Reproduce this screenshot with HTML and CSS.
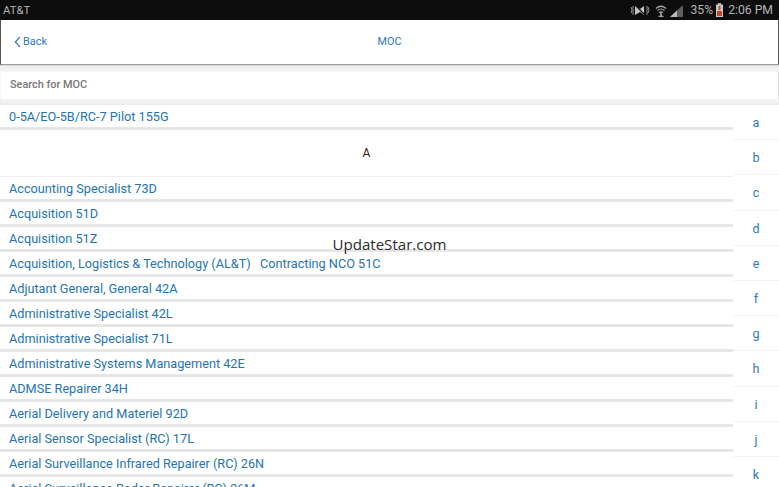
FILE: index.html
```html
<!DOCTYPE html>
<html lang="en">
<head>
<meta charset="utf-8">
<title>MOC</title>
<link rel="stylesheet" href="styles.css">
</head>
<body>
<div class="app">
  <div class="status">
    <span class="carrier">AT&amp;T</span>
    <div class="status-right">
      <svg class="ic" width="20" height="13" viewBox="0 0 20 13"><path d="M1 3l1 3-1 3M18 3l1 3-1 3M3 2v9M17 2v9" stroke="#8f8f8f" fill="none"/><path d="M5 2l5 3 4-3v9l-4-3-5 3z" fill="#c4c4c4"/><path d="M5 1l10 10" stroke="#1a1a1a" stroke-width="1.200"/></svg>
      <svg class="ic wifi" width="12" height="13" viewBox="0 0 12 13"><path d="M1 4.500Q6 0 11 4.500M2.500 6.500Q6 3.500 9.500 6.500M4 8.500Q6 7 8 8.500" stroke="#a8a8a8" stroke-width="1.200" fill="none"/><path d="M6 8v4M3.500 12.500h5" stroke="#a8a8a8" stroke-width="1.600"/></svg>
      <svg class="ic sig" width="14" height="13" viewBox="0 0 14 13"><path d="M0 13L13 1v12z" fill="#5f5f5f"/><path d="M0 13L7 6.500V13z" fill="#bcbcbc"/></svg>
      <span class="pct">35%</span>
      <svg class="ic batt" width="7" height="14" viewBox="0 0 7 14"><path d="M2 0h3v2H2z" fill="#b0b0b0"/><path d="M0 1.500h7V14H0z" fill="#c9c9c9"/><path d="M1 8h5v5H1z" fill="#c4452e"/><path d="M2.500 3h2v4h-2z" fill="#c4452e"/></svg>
      <span class="time">2:06 PM</span>
    </div>
  </div>
  <header class="nav">
    <a class="back"><svg width="7" height="12" viewBox="0 0 7 12"><path d="M6 1L1.300 6 6 11" stroke="#2b7bba" stroke-width="1.100" fill="none"/></svg>Back</a>
    <span class="title">MOC</span>
  </header>
  <div class="search-wrap"><div class="search">Search for MOC</div></div>
  <div class="content">
    <ul class="list">
      <li class="row">0-5A/EO-5B/RC-7 Pilot 155G</li>
      <li class="section">A</li>
      <li class="row">Accounting Specialist 73D</li>
      <li class="row">Acquisition 51D</li>
      <li class="row">Acquisition 51Z</li>
      <li class="row">Acquisition, Logistics &amp; Technology (AL&amp;T)&nbsp;&nbsp; Contracting NCO 51C</li>
      <li class="row">Adjutant General, General 42A</li>
      <li class="row">Administrative Specialist 42L</li>
      <li class="row">Administrative Specialist 71L</li>
      <li class="row">Administrative Systems Management 42E</li>
      <li class="row">ADMSE Repairer 34H</li>
      <li class="row">Aerial Delivery and Materiel 92D</li>
      <li class="row">Aerial Sensor Specialist (RC) 17L</li>
      <li class="row">Aerial Surveillance Infrared Repairer (RC) 26N</li>
      <li class="row">Aerial Surveillance Radar Repairer (RC) 26M</li>
    </ul>
    <ul class="index">
      <li>a</li><li>b</li><li>c</li><li>d</li><li>e</li><li>f</li><li>g</li><li>h</li><li>i</li><li>j</li><li>k</li>
    </ul>
  </div>
  <div class="watermark">UpdateStar.com</div>
</div>
</body>
</html>
```
FILE: styles.css
```css
* { box-sizing: border-box; }
html, body { margin: 0; padding: 0; background: #fff; }
body { font-family: Roboto, "Liberation Sans", sans-serif; }
ul { list-style: none; margin: 0; padding: 0; }
.app { position: relative; width: 779px; height: 487px; overflow: hidden; display: flex; flex-direction: column; }
.status { height: 20px; flex: none; background: #0d0d0d; color: #b4b4b4; display: flex; justify-content: space-between; align-items: center; font-size: 11.300px; padding: 0 6px 0 3px; }
.status-right { display: flex; align-items: center; font-size: 12.200px; }
.ic { display: block; }
.wifi { margin-left: 5px; }
.sig { margin-left: 3px; }
.pct { margin-left: 7px; }
.batt { margin-left: 3px; }
.time { margin-left: 5px; }
.nav { height: 45px; flex: none; position: relative; display: flex; align-items: center; justify-content: center; border-bottom: 1px solid #9d9d9d; border-left: 1px solid #555; border-right: 1px solid #555; background: #fff; box-shadow: 0 1px 0 #d8d8d8; }
.back { position: absolute; left: 13px; top: 15px; display: flex; align-items: center; gap: 2px; color: #2b7bba; font-size: 11px; line-height: 13px; }
.title { color: #2b7bba; font-size: 10.800px; margin-bottom: 1px; }
.search-wrap { flex: none; height: 40px; padding: 7px 0 6px 1px; background: linear-gradient(#ececea, #f6f6f4 20%, #f6f6f4 80%, #ececea); }
.search { height: 27px; background: #fff; color: #777; font-size: 10.900px; font-weight: 500; line-height: 26px; padding-left: 9px; border-right: 1px solid #ddd; }
.content { flex: 1; min-height: 0; display: flex; overflow: hidden; }
.list { width: 733px; flex: none; }
.row { height: 25px; padding-left: 9px; line-height: 24px; font-size: 12.700px; color: #2474b2; border-bottom: 3px solid #e6e6e6; white-space: nowrap; }
.section { height: 47px; text-align: center; line-height: 47px; font-size: 12px; color: #222; border-bottom: 1px solid #efefef; }
.index { flex: 1; }
.index li { height: 35.200px; text-align: center; line-height: 36px; font-size: 12.500px; color: #2b7bba; border-bottom: 1px solid #f4f4f4; }
.watermark { position: absolute; left: 0; width: 779px; top: 235px; text-align: center; font-size: 15.100px; line-height: 18px; color: #2b2b2b; font-family: "Open Sans", sans-serif; }
```
